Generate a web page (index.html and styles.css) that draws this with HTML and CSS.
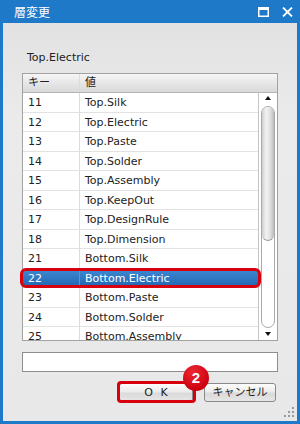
FILE: index.html
```html
<!DOCTYPE html>
<html lang="ja">
<head>
    <meta charset="UTF-8">
    <meta name="viewport" content="width=device-width, initial-scale=1.0">
    <title>層変更</title>
    <link rel="stylesheet" href="styles.css">
</head>
<body>
    <div class="window">
        <!-- Title bar -->
        <div class="titlebar">
            <span class="title">層変更</span>
            <div class="title-buttons">
                <svg width="11" height="10" viewBox="0 0 11 10">
                    <rect x="0.75" y="0.75" width="9.5" height="8.5" fill="none" stroke="#fff" stroke-width="1.5"/>
                    <rect x="0" y="0" width="11" height="3" fill="#fff"/>
                </svg>
                <svg width="11" height="10" viewBox="0 0 11 10">
                    <path d="M1 0.5 L10 9.5 M10 0.5 L1 9.5" stroke="#fff" stroke-width="1.8" fill="none"/>
                </svg>
            </div>
        </div>

        <div class="dialog-body">
            <div class="current-layer">Top.Electric</div>

            <!-- Layer list -->
            <div class="layer-list">
                <div class="list-head">
                    <div class="cell key">キー</div>
                    <div class="cell">値</div>
                </div>
                <div class="list-main">
                    <div class="rows">
                        <div class="row"><div class="cell key">11</div><div class="cell">Top.Silk</div></div>
                        <div class="row"><div class="cell key">12</div><div class="cell">Top.Electric</div></div>
                        <div class="row"><div class="cell key">13</div><div class="cell">Top.Paste</div></div>
                        <div class="row"><div class="cell key">14</div><div class="cell">Top.Solder</div></div>
                        <div class="row"><div class="cell key">15</div><div class="cell">Top.Assembly</div></div>
                        <div class="row"><div class="cell key">16</div><div class="cell">Top.KeepOut</div></div>
                        <div class="row"><div class="cell key">17</div><div class="cell">Top.DesignRule</div></div>
                        <div class="row"><div class="cell key">18</div><div class="cell">Top.Dimension</div></div>
                        <div class="row"><div class="cell key">21</div><div class="cell">Bottom.Silk</div></div>
                        <div class="row selected"><div class="cell key">22</div><div class="cell">Bottom.Electric</div></div>
                        <div class="row"><div class="cell key">23</div><div class="cell">Bottom.Paste</div></div>
                        <div class="row"><div class="cell key">24</div><div class="cell">Bottom.Solder</div></div>
                        <div class="row"><div class="cell key">25</div><div class="cell">Bottom.Assembly</div></div>
                    </div>
                    <div class="scrollbar">
                        <div class="arrow up"></div>
                        <div class="track"><div class="thumb"></div></div>
                        <div class="arrow down"></div>
                    </div>
                </div>
            </div>

            <input class="layer-input" type="text">

            <!-- Buttons -->
            <div class="button-row">
                <div class="ok-wrap">
                    <button class="btn ok">O K</button>
                    <span class="badge">2</span>
                </div>
                <button class="btn">キャンセル</button>
            </div>
        </div>

        <svg class="grip" width="12" height="12" viewBox="0 0 12 12">
            <rect x="10" y="2" width="2" height="2" fill="#9a9a9a"/>
            <rect x="6" y="6" width="2" height="2" fill="#9a9a9a"/>
            <rect x="10" y="6" width="2" height="2" fill="#9a9a9a"/>
            <rect x="2" y="10" width="2" height="2" fill="#9a9a9a"/>
            <rect x="6" y="10" width="2" height="2" fill="#9a9a9a"/>
            <rect x="10" y="10" width="2" height="2" fill="#9a9a9a"/>
        </svg>
    </div>
</body>
</html>
```

FILE: styles.css
```css
/* Page */
body {
    margin: 0;
    padding: 0;
    background: #ffffff;
    font-family: "DejaVu Sans", "Noto Sans CJK JP", sans-serif;
    font-size: 11px;
    color: #222;
}

/* Dialog window */
.window {
    position: relative;
    width: 300px;
    height: 424px;
    display: flex;
    flex-direction: column;
}

.titlebar {
    height: 23px;
    flex: none;
    background: #1e79c9;
    color: #fff;
    display: flex;
    align-items: center;
    justify-content: space-between;
    padding: 0 7px 0 14px;
}

.title {
    font-family: "Noto Sans CJK JP", sans-serif;
    font-size: 12px;
    line-height: 14px;
}

.title-buttons {
    display: flex;
    gap: 13px;
    margin-top: 1px;
}

.dialog-body {
    flex: 1;
    border: 3px solid #1e79c9;
    border-top: 0;
    background: linear-gradient(#e2e2e2, #ebebeb 25%, #e8e8e8);
    padding: 28px 19px 0 19px;
}

.current-layer {
    line-height: 14px;
    padding-left: 5px;
    margin-bottom: 8px;
}

/* List */
.layer-list {
    width: 256px;
    height: 268px;
    box-sizing: border-box;
    border: 1px solid #a2a2a2;
    background: #fff;
    display: flex;
    flex-direction: column;
}

.list-head {
    height: 19px;
    flex: none;
    box-sizing: border-box;
    display: flex;
    background: linear-gradient(#f6f6f6, #e4e4e4 60%, #d9d9d9);
    border-bottom: 1px solid #b5b5b5;
}

.list-head .key {
    border-right: 1px solid #b5b5b5;
}

.cell {
    padding-left: 5px;
    line-height: 18px;
    white-space: nowrap;
}

.cell.key {
    width: 57px;
    box-sizing: border-box;
    flex: none;
    border-right: 1px solid #dcdcdc;
}

.list-main {
    flex: 1;
    display: flex;
    min-height: 0;
}

.rows {
    flex: 1;
    clip-path: inset(0 -10px 0 -10px);
}

.row {
    position: relative;
    height: 19.5px;
    box-sizing: border-box;
    display: flex;
    border-bottom: 1px solid #e2e2e2;
}

.row .cell {
    line-height: 19px;
}

.row.selected {
    background: linear-gradient(#3f8ad2, #2167b2);
    color: #fff;
}

.row.selected .key {
    border-right-color: #5a96d2;
}

/* Red highlight around the selected row */
.row.selected::after {
    content: "";
    position: absolute;
    top: -1px;
    bottom: -1px;
    left: -3px;
    right: -3px;
    border: 3px solid #d8000f;
    border-radius: 6px;
}

/* Scrollbar */
.scrollbar {
    width: 19px;
    flex: none;
    box-sizing: border-box;
    border-left: 1px solid #c4c4c4;
    display: flex;
    flex-direction: column;
    padding: 0 2px;
}

.arrow {
    flex: none;
    display: flex;
    justify-content: center;
}

.arrow.up {
    height: 13px;
    align-items: flex-start;
}

.arrow.up::before {
    content: "";
    margin-top: 3px;
    border-left: 3.5px solid transparent;
    border-right: 3.5px solid transparent;
    border-bottom: 4px solid #111;
}

.arrow.down {
    height: 12px;
    align-items: flex-end;
}

.arrow.down::before {
    content: "";
    margin-bottom: 4px;
    border-left: 3.5px solid transparent;
    border-right: 3.5px solid transparent;
    border-top: 4px solid #111;
}

.track {
    flex: 1;
    border: 1px solid #a9a9a9;
    border-radius: 7px;
    background: #fff;
    overflow: hidden;
}

.thumb {
    height: 133px;
    border-radius: 0 0 6px 6px;
    border-bottom: 1px solid #9c9c9c;
    background: linear-gradient(to right, #cfcfcf, #f2f2f2 35%, #e2e2e2 65%, #bdbdbd);
}

/* Text box */
.layer-input {
    display: block;
    width: 256px;
    height: 20px;
    box-sizing: border-box;
    margin: 11px 0 0 0;
    border: 1px solid #8e8e8e;
    background: #fff;
    padding: 0;
}

/* Buttons */
.button-row {
    display: flex;
    justify-content: flex-end;
    gap: 11px;
    margin-top: 11px;
    padding-right: 2px;
}

.ok-wrap {
    position: relative;
}

.btn {
    width: 72px;
    height: 19px;
    box-sizing: border-box;
    border: 1px solid #8a8a8a;
    border-radius: 3px;
    background: linear-gradient(#fdfdfd, #ececec 45%, #dadada 55%, #e6e6e6);
    font-family: "DejaVu Sans", "Noto Sans CJK JP", sans-serif;
    font-size: 11px;
    color: #222;
    padding: 0;
    line-height: 17px;
}

.btn.ok {
    width: 74px;
    letter-spacing: 2px;
    text-indent: 2px;
}

.ok-wrap::after {
    content: "";
    position: absolute;
    top: -2px;
    bottom: -1px;
    left: -2px;
    right: -3px;
    border: 3px solid #d8000f;
    border-radius: 4px;
}

.badge {
    position: absolute;
    left: 64px;
    top: -18px;
    width: 26px;
    height: 26px;
    border-radius: 50%;
    background: radial-gradient(circle at 40% 30%, #ee2a33, #cc0010 70%);
    color: #fff;
    font-family: "Liberation Sans", sans-serif;
    font-weight: bold;
    font-size: 15px;
    line-height: 26px;
    text-align: center;
    z-index: 1;
}

/* Resize grip */
.grip {
    position: absolute;
    right: 6px;
    bottom: 7px;
}
```
